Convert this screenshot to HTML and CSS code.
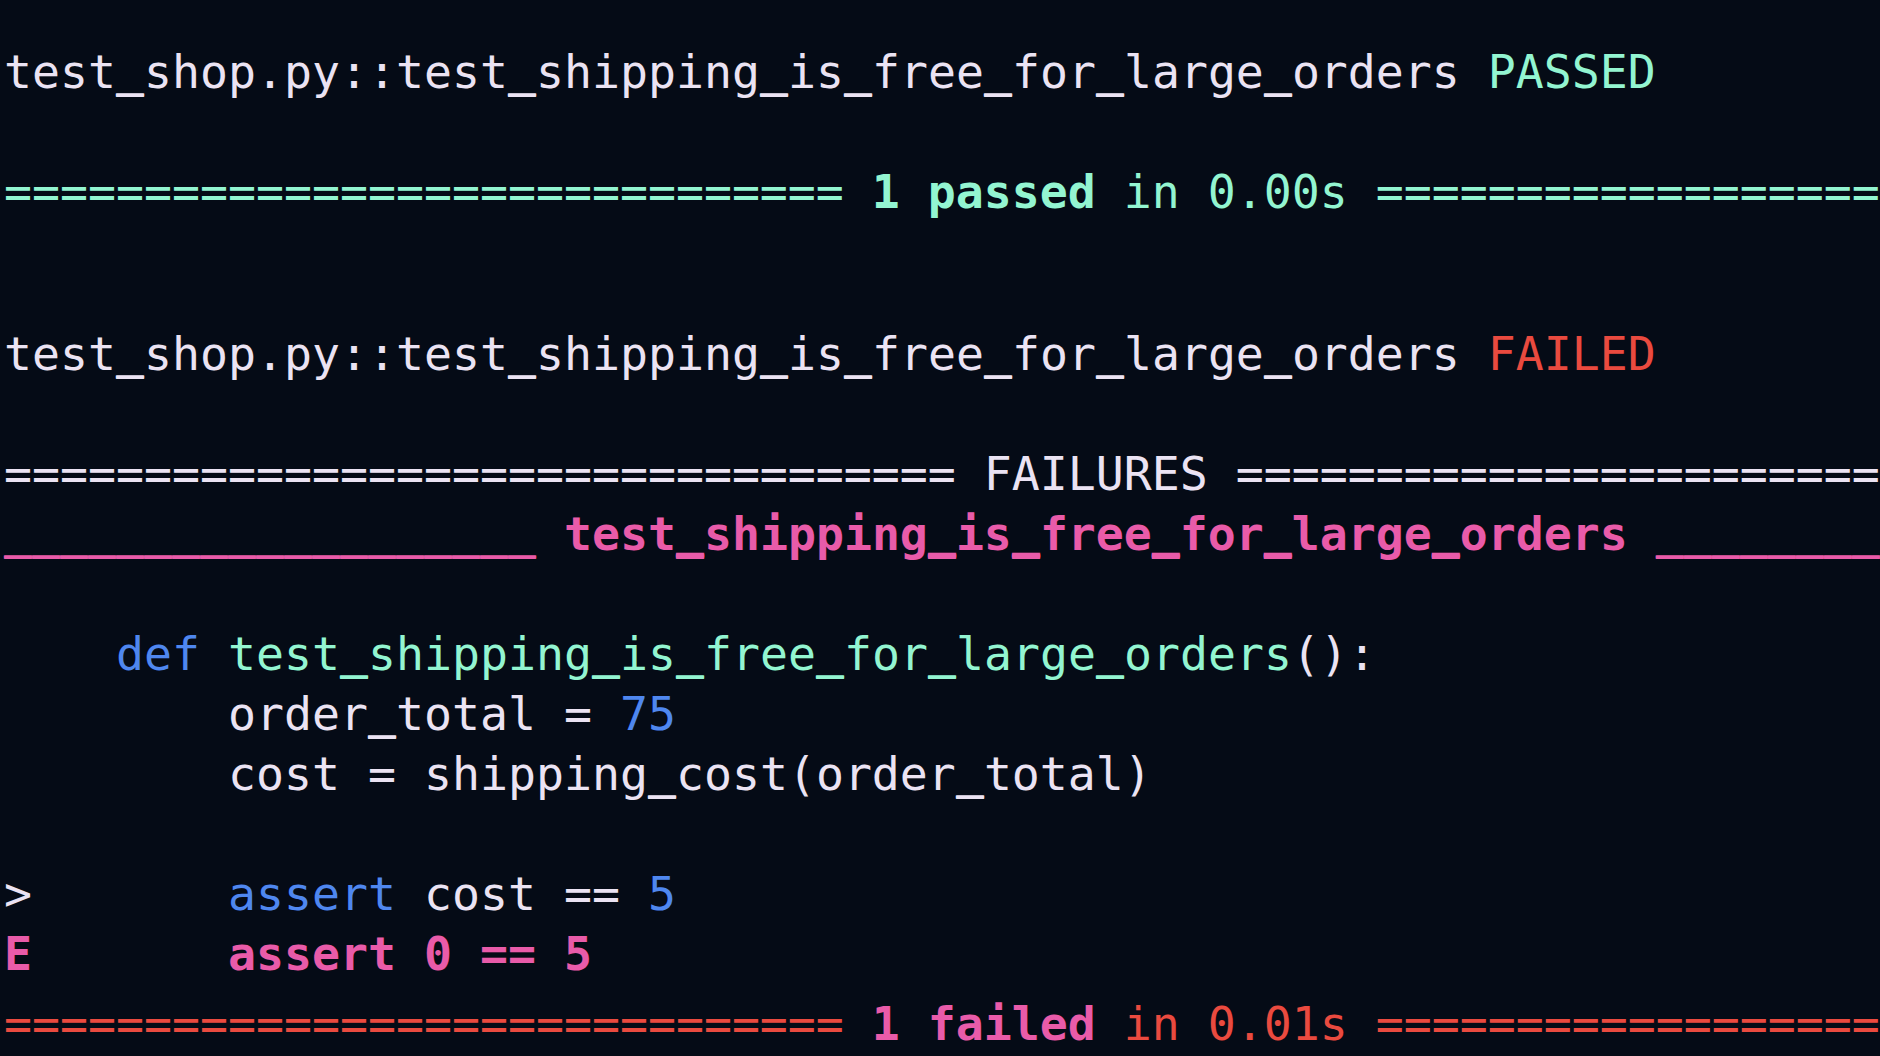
FILE: index.html
```html
<!DOCTYPE html>
<html>
<head>
<meta charset="utf-8">
<link rel="stylesheet" href="styles.css">
</head>
<body>
<div class="term">
  <div class="block">
    <div class="line">test<span class="u">_</span>shop.py::test<span class="u">_</span>shipping<span class="u">_</span>is<span class="u">_</span>free<span class="u">_</span>for<span class="u">_</span>large<span class="u">_</span>orders <span class="green">PASSED</span></div>
    <div class="blank"></div>
    <div class="line green">============================== <b>1 passed</b> in 0.00s ========================================</div>
  </div>
  <div class="block fail-run">
    <div class="line">test<span class="u">_</span>shop.py::test<span class="u">_</span>shipping<span class="u">_</span>is<span class="u">_</span>free<span class="u">_</span>for<span class="u">_</span>large<span class="u">_</span>orders <span class="red">FAILED</span></div>
    <div class="blank"></div>
    <div class="line">================================== FAILURES ========================================</div>
    <div class="line pink"><span class="u">___________________</span> <b>test<span class="u">_</span>shipping<span class="u">_</span>is<span class="u">_</span>free<span class="u">_</span>for<span class="u">_</span>large<span class="u">_</span>orders</b> <span class="u">________________________________</span></div>
    <div class="blank"></div>
    <div class="line">    <span class="blue">def</span> <span class="green">test<span class="u">_</span>shipping<span class="u">_</span>is<span class="u">_</span>free<span class="u">_</span>for<span class="u">_</span>large<span class="u">_</span>orders</span>():</div>
    <div class="line">        order<span class="u">_</span>total = <span class="blue">75</span></div>
    <div class="line">        cost = shipping<span class="u">_</span>cost(order<span class="u">_</span>total)</div>
    <div class="blank"></div>
    <div class="line">&gt;       <span class="blue">assert</span> cost == <span class="blue">5</span></div>
    <div class="line pink"><b>E       assert 0 == 5</b></div>
  </div>
  <div class="summary">
    <div class="line red">============================== <b class="pink">1 failed</b> in 0.01s ========================================</div>
  </div>
</div>
</body>
</html>
```

FILE: styles.css
```css
html, body {
  margin: 0;
  padding: 0;
  background: #050b16;
}

.term {
  width: 1880px;
  height: 1056px;
  box-sizing: border-box;
  padding: 42px 0 0 4px;
  overflow: hidden;
  background: #050b16;
  color: #ebe3f3;
  font-family: "DejaVu Sans Mono", "Liberation Mono", monospace;
  font-size: 46.5px;
  line-height: 60px;
}

.line {
  white-space: pre;
  height: 60px;
}

.blank {
  height: 60px;
}

.fail-run {
  margin-top: 102px;
}

.summary {
  margin-top: 10px;
}

b {
  font-weight: bold;
}

/* terminal underscores sit a little higher and are thicker */
.u {
  line-height: 0;
  vertical-align: 2px;
  text-shadow: 0 -1px 0 currentColor, 0 -2px 0 currentColor;
}

.green { color: #93f5d1; }
.red { color: #ea4a3f; }
.pink { color: #e95ba9; }
.blue { color: #4f87ef; }
```
